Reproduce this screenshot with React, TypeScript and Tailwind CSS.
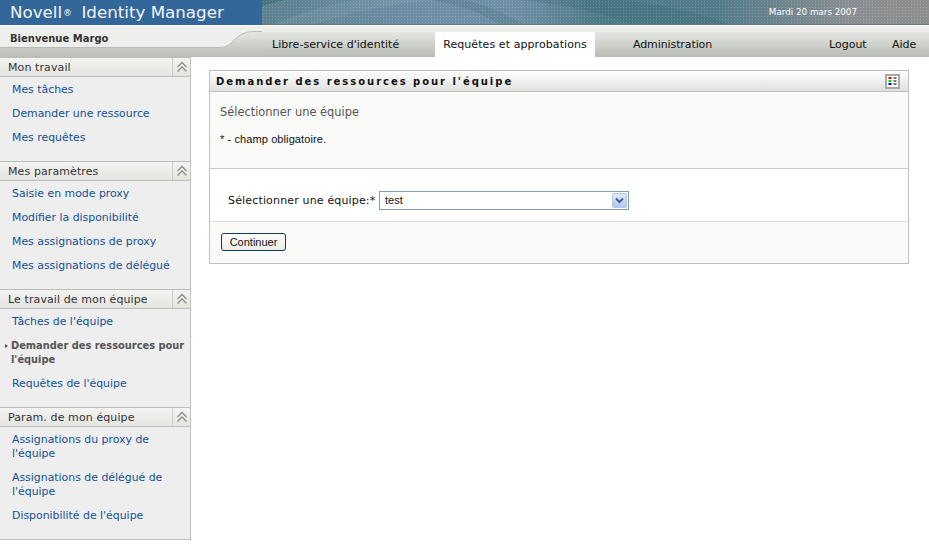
import React from "react";

const font = "[font-family:'DejaVu_Sans',sans-serif]";

type Item = { label: string; active?: boolean };
type Section = { title: string; items: Item[] };

const sections: Section[] = [
  { title: "Mon travail", items: [{ label: "Mes tâches" }, { label: "Demander une ressource" }, { label: "Mes requêtes" }] },
  { title: "Mes paramètres", items: [{ label: "Saisie en mode proxy" }, { label: "Modifier la disponibilité" }, { label: "Mes assignations de proxy" }, { label: "Mes assignations de délégué" }] },
  { title: "Le travail de mon équipe", items: [{ label: "Tâches de l'équipe" }, { label: "Demander des ressources pour l'équipe", active: true }, { label: "Requêtes de l'équipe" }] },
  { title: "Param. de mon équipe", items: [{ label: "Assignations du proxy de l'équipe" }, { label: "Assignations de délégué de l'équipe" }, { label: "Disponibilité de l'équipe" }] },
];

function Chevrons() {
  return (
    <svg width="12" height="12" viewBox="0 0 12 12" fill="none" stroke="#8a8c86" strokeWidth="1.3">
      <path d="M1.5 6 L6 1.5 L10.5 6" />
      <path d="M1.5 10.5 L6 6 L10.5 10.5" />
    </svg>
  );
}

function SideSection({ s }: { s: Section }) {
  return (
    <div className="pb-[11px]">
      <div className="flex h-5 border-y border-[#bdbfb9] bg-gradient-to-b from-[#f4f4f2] to-[#e4e4e1]">
        <div className="flex flex-1 items-center pl-2 pt-[3px] text-[11px] tracking-[0.1px] text-[#333]">{s.title}</div>
        <div className="flex w-[18px] items-center justify-center border-l border-[#cfd0cc]"><Chevrons /></div>
      </div>
      <div className="pt-[1px]">
        {s.items.map((it) =>
          it.active ? (
            <div key={it.label} className="relative py-[5px] pl-[11px] text-[9.85px] font-bold leading-[14px] text-[#555]">
              <span className="absolute left-[5px] top-[10px] h-0 w-0 border-y-[2px] border-l-[3px] border-y-transparent border-l-[#555]" />
              {it.label}
            </div>
          ) : (
            <div key={it.label} className="py-[5px] pl-3 pr-2 text-[10.9px] leading-[14px] text-[#135194]">{it.label}</div>
          )
        )}
      </div>
    </div>
  );
}

export default function App() {
  return (
    <div className={`min-h-[554px] w-[929px] overflow-hidden bg-white ${font}`}>
      {/* banner */}
      <div className="flex h-[26px] border-b border-white">
        <div className="flex w-[262px] items-center bg-[#336699] pl-[10px] text-[16.7px] text-[#f2f6fa]">
          Novell<span className="ml-[1px] mr-[4px] mt-[3px] text-[9px]">®</span>&nbsp;Identity Manager
        </div>
        <div className="relative flex flex-1 items-center justify-end overflow-hidden bg-[linear-gradient(90deg,#5d8290_0%,#6f8fa8_25%,#6f8fa6_38%,#4f7b88_50%,#527c8a_68%,#8a8e92_88%,#8e8e8e_100%)] pr-[72px] text-[8.75px] text-white">
          <svg className="absolute left-0 top-0" width="667" height="25" viewBox="0 0 667 25">
            <path d="M0 25 V8 C14 2 24 0 34 0 H0 Z" fill="#ffffff" fillOpacity="0" />
            <path d="M0 6 L22 0 H0 Z" fill="#3f6d76" fillOpacity="0.7" />
            <path d="M50 25 C90 12 130 4 170 0 H92 C60 6 30 16 10 25 Z" fill="#ffffff" fillOpacity="0.06" />
            <path d="M170 0 C205 6 225 16 238 25 H262 C245 14 225 5 200 0 Z" fill="#3f6d7d" fillOpacity="0.25" />
            <path d="M258 0 C300 4 340 12 370 25 H470 C440 14 400 4 360 0 Z" fill="#2f5f6c" fillOpacity="0.2" />
          </svg>
          <div className="absolute inset-0 bg-[radial-gradient(rgba(255,255,255,0.16)_0.8px,transparent_1px)] bg-[length:3px_3px]" />
          <div className="absolute inset-x-0 bottom-0 h-px bg-[#6f7a80]" />
          <span className="relative">Mardi 20 mars 2007</span>
        </div>
      </div>

      {/* nav */}
      <div className="flex h-[31px] bg-[#eeeeec]">
        <div className="relative w-[262px] shrink-0 pl-[10px] pt-[5px] text-[10px] font-bold text-[#333]">
          <svg className="absolute left-0 top-0" width="262" height="31" viewBox="0 0 262 31">
            <defs>
              <linearGradient id="navg" gradientUnits="userSpaceOnUse" x1="0" y1="6" x2="0" y2="31">
                <stop offset="0" stopColor="#e4e6e3" />
                <stop offset="1" stopColor="#b9bcb4" />
              </linearGradient>
            </defs>
            <path d="M0 22 H220 C234 22 234 6 254 6 H262 V31 H0 Z" fill="url(#navg)" />
            <path d="M0 21.5 H220 C234 21.5 234 5.5 254 5.5 H262" fill="none" stroke="#b9bbb5" />
          </svg>
          <span className="relative">Bienvenue Margo</span>
        </div>
        <div className="flex flex-1 items-end">
          <div className="flex h-[25px] flex-1 items-center bg-gradient-to-b from-[#e4e6e3] to-[#b9bcb4] text-[11px] text-[#111]">
            <span className="ml-[10px] w-[163px] pt-[1px] tracking-[0.04px]">Libre-service d'identité</span>
            <span className="flex h-full w-[160px] items-center justify-center bg-white pt-[1px] tracking-[0.08px]">Requêtes et approbations</span>
            <span className="ml-[38px] w-[196px] pt-[1px] tracking-[-0.1px]">Administration</span>
            <span className="w-[63px] pt-[1px]">Logout</span>
            <span className="pt-[1px]">Aide</span>
          </div>
        </div>
      </div>

      <div className="flex">
        {/* sidebar */}
        <aside className="h-[483px] w-[191px] shrink-0 border-r border-b border-[#bdbfb9] bg-[#eeeeee]">
          {sections.map((s) => <SideSection key={s.title} s={s} />)}
        </aside>

        {/* main */}
        <main className="flex-1 pl-[18px] pr-5 pt-[13px]">
          <div className="border border-[#bdbfb9] bg-[#fafaf8]">
            <div className="flex h-[21px] items-center justify-between border-b border-[#bdbfb9] bg-gradient-to-b from-white to-[#dfe1de] pl-[6px] pr-2">
              <span className="text-[10px] font-bold tracking-[1.97px] text-[#111]">Demander des ressources pour l'équipe</span>
              <span className="flex h-[15px] w-[15px] items-center justify-center border-2 border-[#a8a8a8] bg-white">
                <svg width="9" height="9" viewBox="0 0 9 9">
                  <rect x="0.5" y="0" width="3" height="2" fill="#f00000" />
                  <rect x="0.5" y="3" width="3" height="2" fill="#00e000" />
                  <rect x="0.5" y="6" width="3" height="2" fill="#0000e0" />
                  <rect x="5.5" y="0" width="3" height="2" fill="#777" />
                  <rect x="5.5" y="3" width="3" height="2" fill="#777" />
                  <rect x="5.5" y="6" width="3" height="2" fill="#777" />
                </svg>
              </span>
            </div>
            <div className="h-[77px] border-b border-[#c8c8c6] pl-[10px]">
              <div className="pt-[13px] text-[11.4px] leading-[14px] text-[#555]">Sélectionner une équipe</div>
              <div className="pt-[14px] font-['Liberation_Sans',sans-serif] text-[11px] leading-[13px] tracking-[0.1px] text-[#111]">* - champ obligatoire.</div>
            </div>
            <div className="flex h-[53px] items-start border-b border-[#dcdcda] bg-white pl-[18px] pt-[22px]">
              <span className="w-[151px] text-[11px] leading-[19px] tracking-[0.16px] text-[#111]">Sélectionner une équipe:*</span>
              <div className="flex h-[19px] w-[250px] items-center justify-between border border-[#7f9db9] bg-white pl-[5px] pr-[1px] font-['Liberation_Sans',sans-serif] text-[11px] text-[#111]">
                <span>test</span>
                <span className="flex h-[15px] w-[15px] items-center justify-center rounded-[2px] border border-[#b6c6ea] bg-gradient-to-b from-[#dfe8fc] to-[#b4c6f2]">
                  <svg width="9" height="7" viewBox="0 0 9 7" fill="none" stroke="#4d6185" strokeWidth="2"><path d="M1 1.5 L4.5 5 L8 1.5" /></svg>
                </span>
              </div>
            </div>
            <div className="h-[41px] pl-[11px] pt-[11px]">
              <button className="flex h-[18px] w-[65px] items-center justify-center rounded-[3px] border border-[#0f3a63] bg-gradient-to-b from-white to-[#ecebe4] font-['Liberation_Sans',sans-serif] text-[11px] text-[#111]">Continuer</button>
            </div>
          </div>
        </main>
      </div>
    </div>
  );
}
